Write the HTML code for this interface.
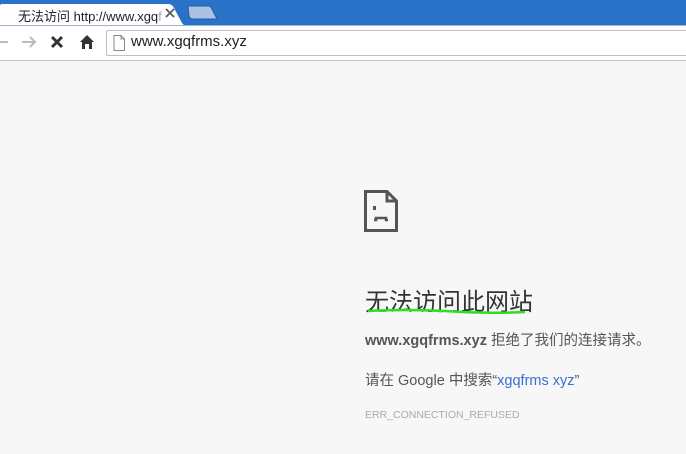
<!DOCTYPE html>
<html><head><meta charset="utf-8"><style>
*{margin:0;padding:0;box-sizing:border-box}
body{width:686px;height:454px;overflow:hidden;background:#f7f7f7;font-family:"Liberation Sans","Noto Sans CJK SC",sans-serif;position:relative}
.top{position:absolute;left:0;top:0;width:686px;height:26px;background:#2a72c8}
.tb{position:absolute;left:0;top:25px;width:686px;height:36px;background:#fff;border-top:1px solid #9fb3cc;border-bottom:1px solid #c6c6c6}
.omni{position:absolute;left:106px;top:30px;width:600px;height:26px;border:1px solid #bfbfbf;border-radius:2px;background:#fff}
.abs{position:absolute;white-space:nowrap}
</style></head><body>
<div class="top"></div>
<svg class="abs" style="left:0;top:0" width="230" height="27">
<path d="M0 26 L0 6 Q0 4 2 4 L168 4 Q172 4 174 8 L182 23 Q184 26 188 26 Z" fill="#fff"/>
<path d="M188 6 L208 6 Q211 6 212 9 L217 19 L193 19 Q190 19 189 16 Z" fill="#a9c1e2" stroke="#1f5ea8" stroke-width="1"/>
</svg>
<div class="tb"></div>
<div class="abs" style="left:18px;top:6px;font-size:13px;color:#222">无法访问 http://www.xgq<span style="color:#b9a">f</span></div>
<svg class="abs" style="left:165px;top:8px" width="10" height="10"><path d="M1 1 L9 9 M9 1 L1 9" stroke="#555" stroke-width="1.6"/></svg>
<svg class="abs" style="left:0;top:32px" width="100" height="22">
<path d="M0 10 H8" stroke="#bbb" stroke-width="2"/>
<path d="M22 10 H35 M30 5 L35 10 L30 15" stroke="#bbb" stroke-width="2" fill="none"/>
<path d="M52 5 L62 15 M62 5 L52 15" stroke="#333" stroke-width="3"/>
<path d="M80 10 L87 3 L94 10 L92 10 L92 17 L89 17 L89 12 L85 12 L85 17 L82 17 L82 10 Z" fill="#333"/>
</svg>
<div class="omni"></div>
<svg class="abs" style="left:112px;top:34px" width="14" height="18"><path d="M2 1.5 H9 L12.5 5 V16.5 H2 Z M9 1.5 V5 H12.5" fill="#fff" stroke="#888"/></svg>
<div class="abs" style="left:131px;top:33px;font-size:15px;color:#222">www.xgqfrms.xyz</div>
<svg class="abs" style="left:364px;top:190px" width="34" height="42">
<path d="M1.5 1.5 H23 L32.5 11 V40.5 H1.5 Z" fill="none" stroke="#555" stroke-width="3"/>
<path d="M23 1.5 V11 H32.5" fill="none" stroke="#555" stroke-width="3"/>
<rect x="9" y="16" width="3" height="4" fill="#555"/>
<path d="M10 30 H12 V28 H22 V30 H24" fill="none" stroke="#555" stroke-width="2.5"/>
</svg>
<div class="abs" style="left:365px;top:282px;font-size:24px;color:#333">无法访问此网站</div>
<svg class="abs" style="left:365px;top:307px" width="170" height="10"><path d="M3 4 Q40 2 80 4 Q120 7 160 5" stroke="#2de01e" stroke-width="2.5" fill="none"/></svg>
<div class="abs" style="left:365px;top:329px;font-size:14.5px;color:#555"><b>www.xgqfrms.xyz</b> 拒绝了我们的连接请求。</div>
<div class="abs" style="left:365px;top:369px;font-size:14.5px;color:#555">请在 Google 中搜索“<span style="color:#3a6fd0">xgqfrms xyz</span>”</div>
<div class="abs" style="left:365px;top:409px;font-size:10.5px;color:#aaa">ERR_CONNECTION_REFUSED</div>
</body></html>
